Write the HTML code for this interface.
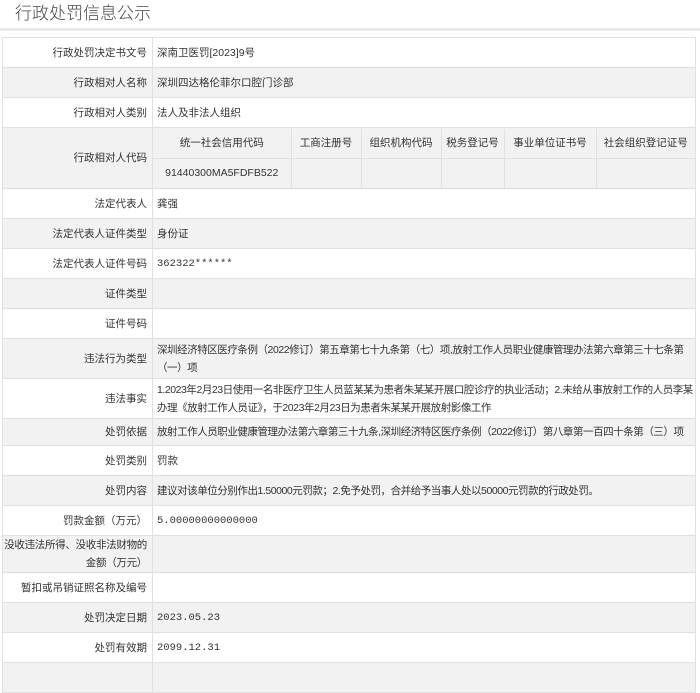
<!DOCTYPE html>
<html><head><meta charset="utf-8"><style>
body{margin:0;background:#fff;font-family:"Liberation Sans","Noto Sans CJK SC",sans-serif;color:#333;width:700px;height:672px;overflow:hidden;position:relative}
.title{position:absolute;left:15px;top:-1px;font-size:17px;color:#444;font-family:"Noto Sans CJK SC",sans-serif;font-weight:300}
.bar{position:absolute;left:0;top:28px;width:700px;height:3px;background:#e8e8e8}
table.m{position:absolute;left:2px;top:37px;width:694px;border-collapse:collapse;font-size:10.5px;table-layout:fixed}
td{border:1px solid #e0e0e0;padding:0 4px;line-height:18px;overflow:hidden}
td.l{text-align:right;padding-right:5px;white-space:nowrap}
tr.g td{background:#f2f2f2}
.sub{border-collapse:collapse;width:100%;font-size:10.5px;table-layout:fixed}
.sub td{text-align:center;height:29px;border:1px solid #e0e0e0;border-top:none;background:#f2f2f2;white-space:nowrap;padding:0}
.cd{padding:0!important}
.n{font-family:"Liberation Mono",monospace;font-size:10.5px}
.nw{white-space:nowrap;letter-spacing:-0.45px}
</style></head><body>
<div class="title">行政处罚信息公示</div>
<div class="bar"></div>
<table class="m">
<colgroup><col style="width:150px"><col></colgroup>
<tr style="height:30px"><td class="l">行政处罚决定书文号</td><td>深南卫医罚[2023]9号</td></tr>
<tr class="g" style="height:30px"><td class="l">行政相对人名称</td><td>深圳四达格伦菲尔口腔门诊部</td></tr>
<tr style="height:30px"><td class="l">行政相对人类别</td><td>法人及非法人组织</td></tr>
<tr class="g" style="height:61px"><td class="l">行政相对人代码</td><td class="cd">
<table class="sub"><colgroup><col style="width:138px"><col style="width:70px"><col style="width:80px"><col style="width:63px"><col style="width:92px"><col></colgroup><tr><td style="border-left:none">统一社会信用代码</td><td>工商注册号</td><td>组织机构代码</td><td>税务登记号</td><td>事业单位证书号</td><td style="border-right:none">社会组织登记证号</td></tr>
<tr><td style="border-left:none;border-bottom:none">91440300MA5FDFB522</td><td style="border-bottom:none"></td><td style="border-bottom:none"></td><td style="border-bottom:none"></td><td style="border-bottom:none"></td><td style="border-right:none;border-bottom:none"></td></tr></table></td></tr>
<tr style="height:30px"><td class="l">法定代表人</td><td>龚强</td></tr>
<tr class="g" style="height:30px"><td class="l">法定代表人证件类型</td><td>身份证</td></tr>
<tr style="height:30px"><td class="l">法定代表人证件号码</td><td class="n">362322******</td></tr>
<tr class="g" style="height:30px"><td class="l">证件类型</td><td></td></tr>
<tr style="height:30px"><td class="l">证件号码</td><td></td></tr>
<tr class="g" style="height:40px"><td class="l">违法行为类型</td><td class="nw">深圳经济特区医疗条例（2022修订）第五章第七十九条第（七）项,放射工作人员职业健康管理办法第六章第三十七条第<br>（一）项</td></tr>
<tr style="height:40px"><td class="l">违法事实</td><td class="nw">1.2023年2月23日使用一名非医疗卫生人员蓝某某为患者朱某某开展口腔诊疗的执业活动；2.未给从事放射工作的人员李某<br>办理《放射工作人员证》，于2023年2月23日为患者朱某某开展放射影像工作</td></tr>
<tr class="g" style="height:27px"><td class="l">处罚依据</td><td class="nw">放射工作人员职业健康管理办法第六章第三十九条,深圳经济特区医疗条例（2022修订）第八章第一百四十条第（三）项</td></tr>
<tr style="height:30px"><td class="l">处罚类别</td><td>罚款</td></tr>
<tr class="g" style="height:30px"><td class="l">处罚内容</td><td class="nw">建议对该单位分别作出1.50000元罚款；2.免予处罚，合并给予当事人处以50000元罚款的行政处罚。</td></tr>
<tr style="height:30px"><td class="l">罚款金额（万元）</td><td class="n">5.00000000000000</td></tr>
<tr class="g" style="height:37px"><td class="l" style="padding-left:0;letter-spacing:-0.3px">没收违法所得、没收非法财物的<br>金额（万元）</td><td></td></tr>
<tr style="height:30px"><td class="l">暂扣或吊销证照名称及编号</td><td></td></tr>
<tr class="g" style="height:30px"><td class="l">处罚决定日期</td><td class="n">2023.05.23</td></tr>
<tr style="height:30px"><td class="l">处罚有效期</td><td class="n">2099.12.31</td></tr>
<tr class="g" style="height:30px"><td class="l"></td><td></td></tr>
</table>
</body></html>
